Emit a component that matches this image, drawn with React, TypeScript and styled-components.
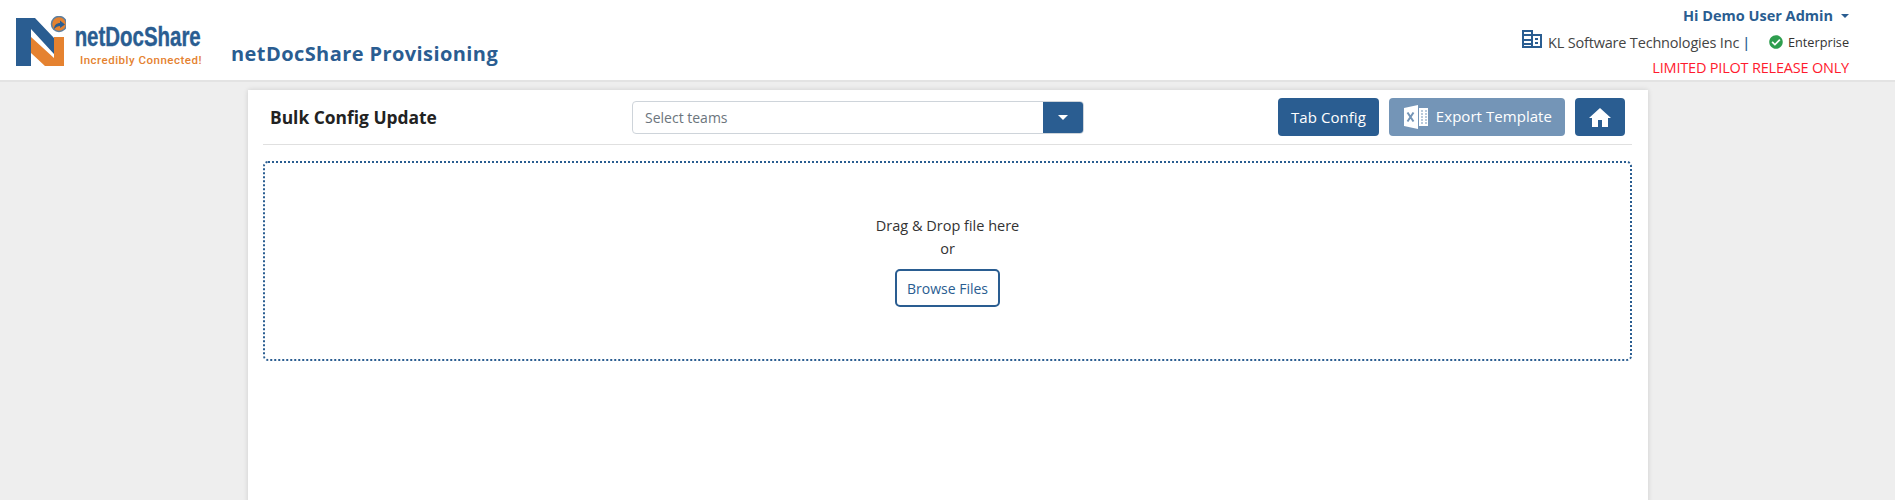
import styled, { createGlobalStyle } from "styled-components";
import { FaCheckCircle } from "react-icons/fa";

const BLUE = "#2a5d91";
const ORANGE = "#e58230";

const GlobalStyle = createGlobalStyle`
  html, body {
    margin: 0;
    padding: 0;
    height: 500px;
    overflow: hidden;
    background: #eeeeee;
    font-family: "Open Sans", "Noto Sans", sans-serif;
  }
  * {
    box-sizing: border-box;
  }
`;

const Header = styled.header`
  height: 82px;
  background: #fff;
  border-bottom: 2px solid #e3e3e3;
  display: flex;
  justify-content: space-between;
  padding: 0 46px 0 16px;
`;

const Brand = styled.div`
  display: flex;
  align-items: flex-start;
`;

const LogoMark = styled.svg`
  width: 50px;
  height: 50px;
  margin-top: 16px;
  display: block;
`;

const LogoText = styled.div`
  width: 128px;
  margin: 23px 0 0 8px;
  display: flex;
  flex-direction: column;
  align-items: flex-end;
`;

const LogoName = styled.span`
  font-family: "Liberation Sans", sans-serif;
  font-size: 28px;
  line-height: 28px;
  font-weight: 700;
  white-space: nowrap;
  color: ${BLUE};
  -webkit-text-stroke: 0.4px ${BLUE};
  transform: scaleX(0.73);
  transform-origin: right center;
  margin-right: 1px;
`;

const LogoTag = styled.span`
  font-family: Roboto, sans-serif;
  font-size: 11.5px;
  line-height: 14px;
  margin-top: 2px;
  font-weight: 500;
  letter-spacing: 0.5px;
  white-space: nowrap;
  color: ${ORANGE};
`;

const AppTitle = styled.h1`
  margin: 40px 0 0 29px;
  font-size: 20px;
  line-height: 27px;
  font-weight: 700;
  letter-spacing: 0.42px;
  color: ${BLUE};
`;

const Account = styled.div`
  display: flex;
  flex-direction: column;
  align-items: flex-end;
  padding-top: 6px;
`;

const UserName = styled.div`
  display: flex;
  align-items: center;
  gap: 8px;
  font-size: 14.5px;
  line-height: 20px;
  font-weight: 700;
  color: ${BLUE};
`;

const Caret = styled.span<{ $color?: string; $size?: number }>`
  width: 0;
  height: 0;
  border-left: ${(p) => p.$size ?? 4}px solid transparent;
  border-right: ${(p) => p.$size ?? 4}px solid transparent;
  border-top: ${(p) => p.$size ?? 4}px solid ${(p) => p.$color ?? BLUE};
`;

const OrgRow = styled.div`
  display: flex;
  align-items: center;
  margin-top: 5px;
  height: 22px;
  font-size: 14.5px;
  letter-spacing: -0.18px;
  color: #444;
`;

const OrgIcon = styled.svg`
  width: 20px;
  height: 18px;
  margin-right: 6px;
  margin-top: -6px;
`;

const Pipe = styled.span`
  color: ${BLUE};
  margin-left: 3px;
  font-weight: 600;
`;

const PlanBadge = styled.span`
  display: inline-flex;
  align-items: center;
  gap: 5px;
  margin-left: 19px;
  font-size: 12.7px;
  letter-spacing: 0;
  color: #333;
  svg {
    color: #2e9e4f;
  }
`;

const Notice = styled.div`
  margin-top: 5px;
  font-size: 14.5px;
  line-height: 20px;
  letter-spacing: -0.2px;
  color: #ff1a2e;
`;

const Card = styled.main`
  width: 1400px;
  height: 430px;
  margin: 8px 0 0 248px;
  background: #fff;
  box-shadow: 0 0 5px rgba(0, 0, 0, 0.14);
  padding: 0 16px 0 15px;
`;

const Toolbar = styled.div`
  height: 55px;
  border-bottom: 1px solid #e0e0e0;
  display: grid;
  grid-template-columns: 369px 452px 1fr;
  align-items: start;
  padding-top: 8px;
`;

const PageTitle = styled.h2`
  margin: 8px 0 0 7px;
  font-size: 17.4px;
  line-height: 22px;
  font-weight: 700;
  color: #222;
`;

const TeamSelect = styled.div`
  height: 33px;
  margin-top: 3px;
  display: flex;
  border: 1px solid #ced4da;
  border-radius: 4px;
  overflow: hidden;
`;

const SelectText = styled.div`
  flex: 1;
  padding-left: 12px;
  font-size: 14px;
  line-height: 31px;
  color: #6c757d;
`;

const SelectButton = styled.div`
  width: 40px;
  background: ${BLUE};
  display: flex;
  align-items: center;
  justify-content: center;
`;

const Actions = styled.div`
  display: flex;
  justify-content: flex-end;
  gap: 10px;
  padding-right: 7px;
`;

const ActionButton = styled.button<{ $faded?: boolean }>`
  height: 38px;
  padding: 0 13px;
  display: inline-flex;
  align-items: center;
  gap: 8px;
  border: 0;
  border-radius: 4px;
  background: ${(p) => (p.$faded ? "#7495b7" : BLUE)};
  color: #fff;
  font-family: inherit;
  font-size: 15px;
  letter-spacing: 0.05px;
`;

const ExportButton = styled(ActionButton)`
  padding: 0 13px 3px 15px;
  svg {
    margin-top: 3px;
  }
`;

const HomeButton = styled(ActionButton)`
  width: 50px;
  justify-content: center;
  padding: 0;
`;

const DropZone = styled.section`
  height: 200px;
  margin-top: 16px;
  border: 2px dotted ${BLUE};
  border-radius: 5px;
  display: flex;
  flex-direction: column;
  align-items: center;
  padding-top: 51px;
  font-size: 14.5px;
  line-height: 23px;
  color: #333;
`;

const BrowseButton = styled.button`
  height: 38px;
  margin-top: 9px;
  padding: 0 10px;
  background: #fff;
  border: 2px solid ${BLUE};
  border-radius: 5px;
  color: ${BLUE};
  font-family: inherit;
  font-size: 14px;
`;

export default function App() {
  return (
    <>
      <GlobalStyle />
      <Header>
        <Brand>
          <LogoMark viewBox="0 0 50 50">
            <path d="M0 2H19L38 22V38L15 13V50H0Z" fill={BLUE} />
            <path d="M15 21L38 42V21H48V50H29L15 37Z" fill={ORANGE} />
            <circle cx="43" cy="8" r="7.5" fill={ORANGE} stroke="#5d7f9f" strokeWidth="1.5" />
            <path d="M38 13C38 9 41 7 44 7V4.5L49 8.5L44 12V10C42 10 40 11 38 13Z" fill={BLUE} />
          </LogoMark>
          <LogoText>
            <LogoName>netDocShare</LogoName>
            <LogoTag>Incredibly Connected!</LogoTag>
          </LogoText>
          <AppTitle>netDocShare Provisioning</AppTitle>
        </Brand>
        <Account>
          <UserName>
            Hi Demo User Admin
            <Caret />
          </UserName>
          <OrgRow>
            <OrgIcon viewBox="0 0 20 18">
              <path
                d="M0 0H11V4H20V18H0ZM2 2V4H9V2ZM2 6V9H9V6ZM2 11V13H9V11ZM2 15V16H9V15ZM11 6V16H18V6ZM13 8H16V10H13ZM13 12H16V14H13Z"
                fill={BLUE}
                fillRule="evenodd"
              />
            </OrgIcon>
            KL Software Technologies Inc
            <Pipe>|</Pipe>
            <PlanBadge>
              <FaCheckCircle size={14} />
              Enterprise
            </PlanBadge>
          </OrgRow>
          <Notice>LIMITED PILOT RELEASE ONLY</Notice>
        </Account>
      </Header>
      <Card>
        <Toolbar>
          <PageTitle>Bulk Config Update</PageTitle>
          <TeamSelect>
            <SelectText>Select teams</SelectText>
            <SelectButton>
              <Caret $color="#fff" $size={5} />
            </SelectButton>
          </TeamSelect>
          <Actions>
            <ActionButton>Tab Config</ActionButton>
            <ExportButton $faded>
              <svg width="24" height="24" viewBox="0 0 24 24">
                <path d="M0 3L14 0V24L0 21Z" fill="#fff" />
                <path d="M15 3H24V21H15Z" fill="#fff" />
                <path d="M17 6H19M21 6H23M17 9H19M21 9H23M17 12H19M21 12H23M17 15H19M21 15H23M17 18H19M21 18H23" stroke="#7495b7" strokeWidth="1.2" />
                <path d="M3.5 7.5L9.5 16.5M9.5 7.5L3.5 16.5" stroke="#7495b7" strokeWidth="2" />
              </svg>
              Export Template
            </ExportButton>
            <HomeButton aria-label="Home">
              <svg width="22" height="19" viewBox="0 0 22 19">
                <path d="M11 0L22 10H19V19H13V12H9V19H3V10H0Z" fill="#fff" />
              </svg>
            </HomeButton>
          </Actions>
        </Toolbar>
        <DropZone>
          <div>Drag &amp; Drop file here</div>
          <div>or</div>
          <BrowseButton>Browse Files</BrowseButton>
        </DropZone>
      </Card>
    </>
  );
}
